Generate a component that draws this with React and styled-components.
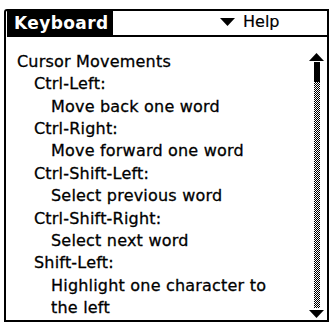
import React from "react";
import styled, { createGlobalStyle } from "styled-components";

const GlobalStyle = createGlobalStyle`
  html, body {
    margin: 0;
    padding: 0;
    background: #ffffff;
  }
  body {
    padding: 9px 0 0 4px;
    font-family: "DejaVu Sans", "Liberation Sans", sans-serif;
  }
`;

const lines = [
  { lv: 0, txt: "Cursor Movements" },
  { lv: 1, txt: "Ctrl-Left:" },
  { lv: 2, txt: "Move back one word" },
  { lv: 1, txt: "Ctrl-Right:" },
  { lv: 2, txt: "Move forward one word" },
  { lv: 1, txt: "Ctrl-Shift-Left:" },
  { lv: 2, txt: "Select previous word" },
  { lv: 1, txt: "Ctrl-Shift-Right:" },
  { lv: 2, txt: "Select next word" },
  { lv: 1, txt: "Shift-Left:" },
  { lv: 2, txt: "Highlight one character to" },
  { lv: 2, txt: "the left" },
];

const App = () => {
  return (
    <>
      <GlobalStyle />
      <Form>
        <Header>
          <TitleTab>Keyboard</TitleTab>
          <MenuArea>
            <svg width="15" height="8" viewBox="0 0 15 8">
              <polygon points="0,0 15,0 7.5,8" fill="#000" />
            </svg>
            <span>Help</span>
          </MenuArea>
        </Header>
        <Body>
          <List>
            {lines.map((val, idx) => (
              <Line key={idx} $lv={val.lv}>
                {val.txt}
              </Line>
            ))}
          </List>
          <ScrollBar>
            <svg width="15" height="8" viewBox="0 0 15 8">
              <polygon points="7.5,0 15,8 0,8" fill="#000" />
            </svg>
            <Thumb />
            <Track />
            <svg width="15" height="8" viewBox="0 0 15 8">
              <polygon points="0,0 15,0 7.5,8" fill="#000" />
            </svg>
          </ScrollBar>
        </Body>
      </Form>
    </>
  );
};

const Form = styled.div`
  box-sizing: border-box;
  width: 325px;
  height: 313px;
  border: 2px solid #000;
  border-top-left-radius: 3px;
  display: flex;
  flex-direction: column;
  background: #fff;
`;

const Header = styled.div`
  display: flex;
  height: 26px;
  padding-left: 1px;
`;

const TitleTab = styled.div`
  width: 106px;
  height: 26px;
  box-sizing: border-box;
  background: #000;
  color: #fff;
  font-weight: bold;
  font-size: 17px;
  letter-spacing: 0.4px;
  line-height: 24px;
  padding-left: 7px;
`;

const MenuArea = styled.div`
  flex: 1;
  display: flex;
  align-items: center;
  gap: 8px;
  padding-left: 107px;
  padding-bottom: 2px;
  border-bottom: 2px solid #000;
  font-size: 16px;
  color: #000;
  line-height: 20px;
  -webkit-text-stroke: 0.2px #000;

  & > svg {
    display: block;
  }
`;

const Body = styled.div`
  flex: 1;
  display: flex;
  min-height: 0;
`;

const List = styled.div`
  flex: 1;
  padding: 14px 0 0 11px;
`;

const Line = styled.div`
  padding-left: ${(p) => p.$lv * 17}px;
  font-size: 16px;
  letter-spacing: 0.2px;
  line-height: 22.36px;
  height: 22.36px;
  color: #000;
  white-space: nowrap;
  -webkit-text-stroke: 0.3px #000;
`;

const ScrollBar = styled.div`
  width: 15px;
  margin: 16px 3px 2px 0;
  display: flex;
  flex-direction: column;
  align-items: center;

  & > svg {
    display: block;
    flex: none;
  }
`;

const Thumb = styled.div`
  width: 6px;
  height: 20px;
  margin-top: 1px;
  background: #000;
`;

const Track = styled.div`
  flex: 1;
  width: 6px;
  margin-bottom: 2px;
  background: repeating-conic-gradient(#000 0 25%, #fff 0 50%) 0 0 / 2px 2px;
`;

export default App;
